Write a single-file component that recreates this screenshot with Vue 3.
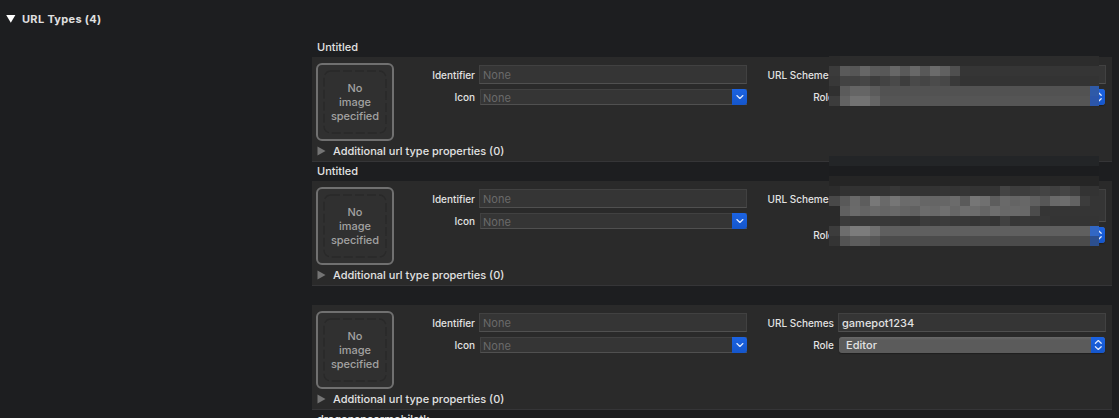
<script setup>
const groups = [
  { title: 'Untitled', scheme: '' },
  { title: 'Untitled', scheme: '', tall: true },
  { title: '', scheme: 'gamepot1234' },
]
const fill = (list, value) => [...list, ...Array(27 - list.length).fill(value)]
const hex = (v) => v.length === 2 ? '#' + v.repeat(3) : '#' + v
const parse = (text, rest, last) => {
  const row = fill(text.split(' ').filter(Boolean), rest)
  if (last) row[26] = last
  return row.map(hex)
}
const masks = [
  { name: 'mask-a', rows: [
    parse('2a', '2c'),
    parse('3b 5a 56 66 5a 58 67 59 68 58 6b 60 4f', '35'),
    parse('38 43 42 46 3d 43 49 3d 49 45 4b 47 39', '33'),
    parse('30 5b 65 65 5b', '52', '2f5aa8'),
    parse('3c 62 72 72 65', '55', '2c56aa'),
  ] },
  { name: 'mask-b', rows: [
    parse('', '232527'),
    parse('', '1c1d1f'),
    parse('', '25'),
    parse('2c 32 32 32 32 33 37 33 33 33 33 35 33 35 33 33 33 44 3d 3d 40 44 3f 45 3f', '33'),
    parse('48 59 69 5d 78 69 76 6b 6c 66 65 66 6b 5a 76 70 5d 69 64 67 60 57 69 6d 62 3c', '35'),
    parse('2a 60 6a 64 69 65 69 64 61 6c 69 70 67 6e 6c 65 6e 68 69 68 4c', '35'),
    parse('2a 3b 38 38 38 38 38 35 35 3c 39 3c 39 38 35 38 35 41 36 38 36 37', '34'),
    parse('3c 6d 7c 7c 70', '5f', '3267c4'),
    parse('34 53 5d 5d 56', '4b', '2c4f8e'),
  ] },
]
</script>

<template>
  <main class="editor">
    <header class="section-head">
      <svg width="10" height="8" viewBox="0 0 10 8"><path d="M.2 0h9.2L4.8 7.8z" fill="#fff" /></svg>
      <h1>URL Types (4)</h1>
    </header>
    <section v-for="(g, i) in groups" :key="i" class="group">
      <h2>{{ g.title }}</h2>
      <div class="panel">
        <div class="top">
          <div class="well">
            <svg class="dash" width="64" height="64"><rect x="1" y="1" width="62" height="62" rx="7" /></svg>
            <span>No<br>image<br>specified</span>
          </div>
          <div class="fields">
            <label>Identifier</label><div class="input dim">None</div>
            <label>Icon</label>
            <div class="combo dim"><span>None</span>
              <i><svg width="15" height="16"><path d="M4.9 6.6l3 2.8 3-2.8" /></svg></i>
            </div>
          </div>
          <div class="fields second" :class="{ tall: g.tall }">
            <label>URL Schemes</label><div class="input">{{ g.scheme }}</div>
            <label>Role</label>
            <div class="select"><span>Editor</span>
              <i><svg width="14" height="16"><path d="M4.4 6.3l2.9-2.7 2.9 2.7M4.4 9.7l2.9 2.7 2.9-2.7" /></svg></i>
            </div>
          </div>
        </div>
        <div class="more">
          <svg width="9" height="10"><path d="M.5 .5v9L8.5 5z" fill="#747474" /></svg>
          <span>Additional url type properties (0)</span>
        </div>
      </div>
    </section>
    <h2 class="last">dragonspearmobiletk</h2>
    <div v-for="m in masks" :key="m.name" class="mask" :class="m.name">
      <template v-for="(row, r) in m.rows" :key="r">
        <b v-for="(c, n) in row" :key="n" :style="{ background: c }"></b>
      </template>
    </div>
  </main>
</template>

<style>
body { margin: 0; background: #1d1e20; overflow: hidden; }
</style>
<style scoped>
* { box-sizing: border-box; }
.editor { position: relative; width: 1119px; height: 418px; overflow: hidden; background: #1d1e20; color: #e2e2e2; font: 500 11px/14px Inter, sans-serif; }
.section-head { display: flex; align-items: center; height: 38px; padding-left: 6px; gap: 6px; }
h1 { margin: 0; font-size: 11px; font-weight: 700; letter-spacing: .32px; color: #e0e0e0; }
h2 { margin: 0; height: 19px; padding: 2px 0 0 5px; font-size: 11px; font-weight: 500; letter-spacing: 0; line-height: 14px; white-space: nowrap; }
.group, .last { width: 800px; margin-left: 312px; }
.panel { height: 105px; background: #2a2a2a; border-bottom: 1px solid #353537; padding: 6px 6px 0 4px; }
.top { display: flex; height: 78px; }
.well { position: relative; width: 78px; height: 78px; border: 2px solid #707070; border-radius: 6px; background: #303030; display: flex; align-items: center; justify-content: center; text-align: center; color: #a2a2a2; letter-spacing: -.05px; }
.dash { position: absolute; left: 5px; top: 5px; }
.dash rect { fill: none; stroke: #292929; stroke-width: 1.3; stroke-dasharray: 9 3; }
.fields { display: grid; grid-template-columns: 85px 268px; grid-template-rows: 19px 16px; row-gap: 5px; align-content: start; padding-top: 2px; }
.second { grid-template-columns: 91px 268px; }
.tall { grid-template-rows: 33px 16px; }
label { text-align: right; padding-right: 4px; font-size: 10px; line-height: 14px; padding-top: 3px; white-space: nowrap; }
.combo, .select { line-height: 16px; }
label:nth-of-type(2) { padding-top: 1px; }
.input { border: 1px solid #414141; border-bottom-color: #505050; background: #353535; padding: 2px 3px; letter-spacing: .02px; }
.combo { display: flex; justify-content: space-between; height: 16px; margin-left: 1px; border: solid #414141; border-width: 1px 0 1px 1px; border-bottom-color: #505050; background: #353535; padding-left: 2px; letter-spacing: .02px; }
.dim { color: #6a6a6a; font-weight: 400; }
i { display: block; height: 16px; background: linear-gradient(#1b63e3, #1556cb); }
i svg { display: block; }
i path { fill: none; stroke: #dce8ff; stroke-width: 1.3; stroke-linecap: round; stroke-linejoin: round; }
.combo i { width: 15px; margin-top: -1px; border-radius: 0 3px 3px 0; }
.select { display: flex; justify-content: space-between; height: 16px; margin: 0 1px; border-radius: 3px; overflow: hidden; background: linear-gradient(#696969, #5b5b5b 20%); padding-left: 7px; letter-spacing: .05px; box-shadow: 0 1px 1px #1e1e1e; }
.select i { width: 14px; }
.more { display: flex; align-items: center; gap: 7px; height: 20px; padding-left: 1px; letter-spacing: 0; }
.mask { position: absolute; left: 829px; display: grid; grid-template-columns: 11px repeat(25, 10px) 9px; grid-auto-rows: 10px; }
.mask-a { top: 56px; }
.mask-b { top: 156px; }
</style>
